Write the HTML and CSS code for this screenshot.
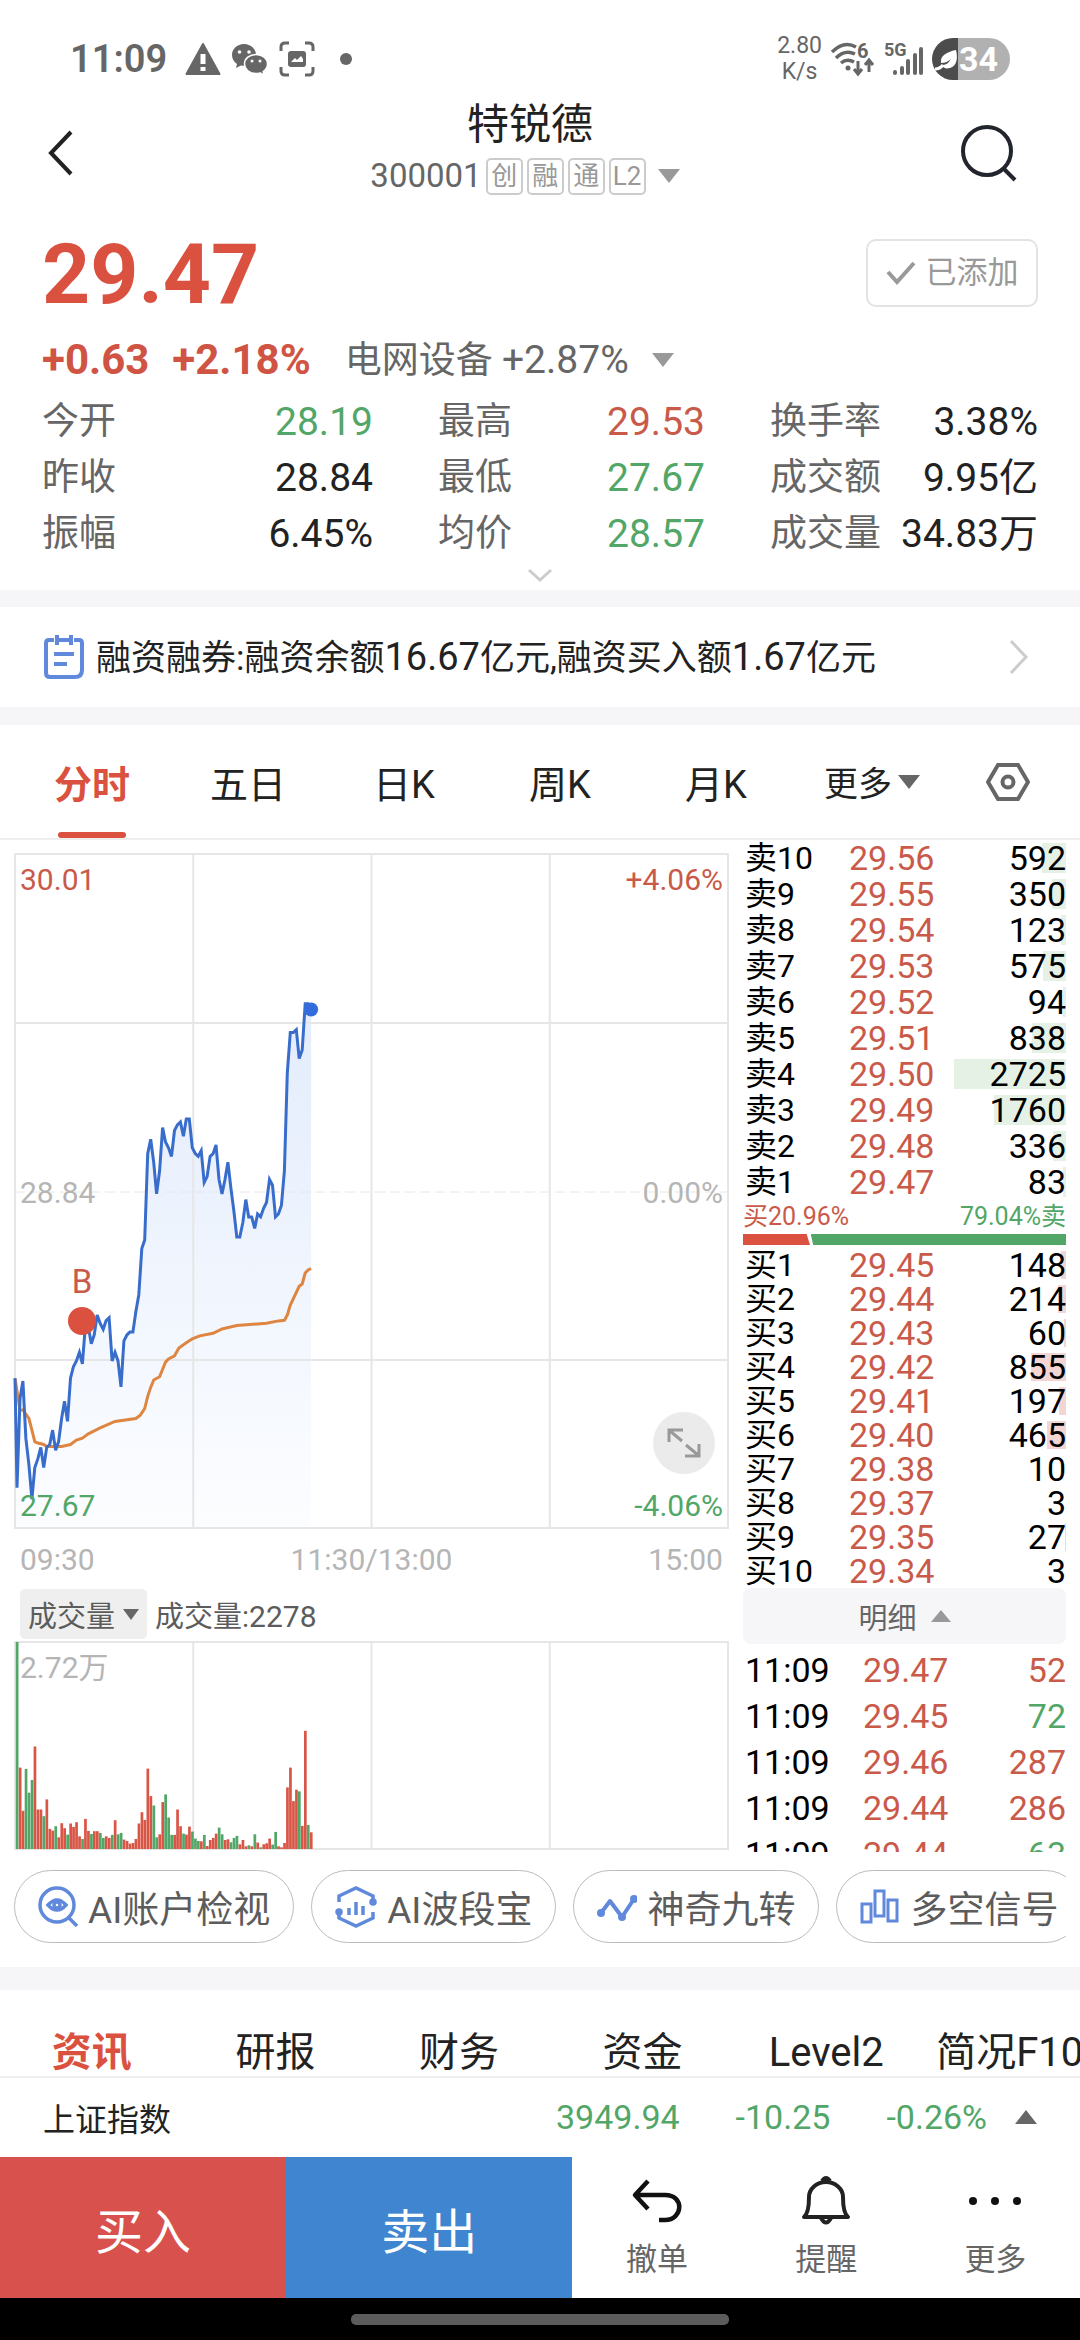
FILE: index.html
```html
<!DOCTYPE html>
<html lang="zh-CN">
<head>
  <meta charset="UTF-8" />
  <meta name="viewport" content="width=device-width, initial-scale=1.0"/>
  <title>特锐德 300001</title>
  <link rel="stylesheet" href="styles.css">
</head>
<body>

<!-- Status bar -->
<div class="status">
  <div class="status-side">
    <span class="clock">11:09</span>
    <svg width="36" height="36" viewBox="0 0 36 36"><path d="M18 3 L34.5 33 H1.5 Z" fill="#666" stroke="#666" stroke-width="2" stroke-linejoin="round"/><path d="M15.5 13h5v10h-5zM15.5 26h5v4h-5z" fill="#fff"/></svg>
    <svg width="38" height="36" viewBox="0 0 38 36"><path d="M13 3C6 3 1 8 1 14c0 4 2 7 5 9l-1 4 5-2.5c7 1.5 15-2.5 15-10.5C25 8 20 3 13 3z" fill="#666"/><path d="M25 13.5c-6.5 0-11.5 4-11.5 9.5s5 9.5 11.5 9.5c1.5 0 3-.2 4-.6l4 2.3-.8-3.7c2.5-1.8 4.3-4.3 4.3-7.5 0-5.5-5-9.5-11.5-9.5z" fill="#666" stroke="#fff" stroke-width="1.5"/><g fill="#fff"><circle cx="8.5" cy="11" r="1.8"/><circle cx="18" cy="11" r="1.8"/><circle cx="21" cy="20" r="1.5"/><circle cx="29" cy="20" r="1.5"/></g></svg>
    <svg width="36" height="36" viewBox="0 0 36 36"><path d="M2 10V6q0-4 4-4h4M26 2h4q4 0 4 4v4M34 26v4q0 4-4 4h-4M10 34H6q-4 0-4-4v-4" fill="none" stroke="#666" stroke-width="3"/><rect x="9" y="10" width="18" height="16" rx="3" fill="#666"/><path d="M12 21l4-4 2 2 4-4 2 3v3z" fill="#fff"/></svg>
    <span class="dot"></span>
  </div>
  <div class="status-side status-right">
    <span class="speed">2.80<br>K/s</span>
    <svg width="46" height="36" viewBox="0 0 46 36"><g fill="none" stroke="#666" stroke-width="3.5"><path d="M2 11Q14-1 26 6"/><path d="M6 17Q15 8 25 13"/><path d="M11 22Q17 17 24 21"/><path d="M28 20v12M24 28l4 5 4-5M39 31V20M35 24l4-5 4 5" stroke-width="3"/></g><circle cx="18" cy="27" r="2.5" fill="#666"/><text x="27" y="17" class="st-text st-six">6</text></svg>
    <svg width="40" height="36" viewBox="0 0 40 36"><text x="0" y="15" class="st-text">5G</text><path d="M11 32v-1M18 32V27M24 32V20M31 32V14M37 32V8" stroke="#666" stroke-width="4" stroke-linecap="round"/></svg>
    <span class="battery">
      <svg width="24" height="28" viewBox="0 0 24 28"><path d="M21 5c2 8 1 16-6 18-4 1-7 0-8-3 5 0 7-3 9-6-4 3-6 4-10 4-1-7 5-11 15-13z" fill="#fff"/><path d="M0 24q5 0 8-4" stroke="#fff" stroke-width="3" fill="none"/></svg>34
    </span>
  </div>
</div>

<!-- Title bar -->
<header class="topbar">
  <button class="icon-btn" aria-label="返回"><svg width="40" height="52" viewBox="0 0 40 52"><path d="M31 5L11 26l20 21" fill="none" stroke="#222" stroke-width="4"/></svg></button>
  <div class="stock">
    <h1>特锐德</h1>
    <div class="code">
      <span>300001</span>
      <i class="badge">创</i><i class="badge">融</i><i class="badge">通</i><i class="badge">L2</i>
      <i class="down"></i>
    </div>
  </div>
  <button class="icon-btn" aria-label="搜索"><svg width="58" height="58" viewBox="0 0 58 58"><circle cx="27" cy="27" r="24" fill="none" stroke="#22252d" stroke-width="4"/><path d="M43 44l12 12" stroke="#22252d" stroke-width="4"/></svg></button>
</header>

<!-- Quote -->
<section class="quote">
  <div class="price-row">
    <strong class="price">29.47</strong>
    <button class="added"><svg width="30" height="26" viewBox="0 0 30 26"><path d="M2 12l9 10L28 3" fill="none" stroke="#999" stroke-width="4"/></svg>已添加</button>
  </div>
  <div class="change-row">
    <b>+0.63</b><b>+2.18%</b>
    <span class="sector">电网设备 <em>+2.87%</em></span>
    <i class="down"></i>
  </div>
  <dl class="stats">
    <div><dt>今开</dt><dd class="green">28.19</dd></div>
    <div><dt>最高</dt><dd class="red">29.53</dd></div>
    <div><dt>换手率</dt><dd>3.38%</dd></div>
    <div><dt>昨收</dt><dd>28.84</dd></div>
    <div><dt>最低</dt><dd class="green">27.67</dd></div>
    <div><dt>成交额</dt><dd>9.95亿</dd></div>
    <div><dt>振幅</dt><dd>6.45%</dd></div>
    <div><dt>均价</dt><dd class="green">28.57</dd></div>
    <div><dt>成交量</dt><dd>34.83万</dd></div>
  </dl>
  <svg class="expand" width="28" height="20" viewBox="0 0 28 20"><path d="M3 4l11 10L25 4" fill="none" stroke="#ccc" stroke-width="3"/></svg>
</section>

<!-- Margin notice -->
<a class="notice" href="#">
  <svg width="42" height="46" viewBox="0 0 42 46" fill="none" stroke="#6089dc" stroke-width="4"><path d="M11 6H6Q3 6 3 9v30q0 4 4 4h25q7 0 7-7V9q0-3-3-3h-5M16 6h10M14 1v10M28 1v10M11 20h20M11 30h13"/></svg>
  <span>融资融券:融资余额<b>16.67</b>亿元,融资买入额<b>1.67</b>亿元</span>
  <svg width="20" height="36" viewBox="0 0 20 36"><path d="M2 2l15 16L2 34" fill="none" stroke="#ccc" stroke-width="3"/></svg>
</a>

<!-- Chart period tabs -->
<nav class="periods">
  <button class="active">分时</button>
  <button>五日</button>
  <button>日K</button>
  <button>周K</button>
  <button>月K</button>
  <button class="more">更多<i class="down dark"></i></button>
  <button class="setting" aria-label="设置"><svg width="44" height="40" viewBox="0 0 44 40" fill="none" stroke="#666" stroke-width="4"><path d="M12 3h20l10 17-10 17H12L2 20z"/><circle cx="22" cy="20" r="5.5"/></svg></button>
</nav>

<main class="board">
  <section class="charts">
    <div class="plot">
      <svg id="priceChart" viewBox="0 0 713 674" preserveAspectRatio="none"></svg>
      <span class="tl red">30.01</span><span class="tr red">+4.06%</span>
      <span class="ml">28.84</span><span class="mr">0.00%</span>
      <span class="bl green">27.67</span><span class="br green">-4.06%</span>
      <button class="full" aria-label="全屏"><svg width="36" height="36" viewBox="0 0 36 36" fill="none" stroke="#999" stroke-width="3"><path d="M3 17V5h14M4 6l12 10M20 20l12 10M19 31h14V19"/></svg></button>
    </div>
    <div class="times"><span>09:30</span><span>11:30/13:00</span><span>15:00</span></div>
    <div class="vol-head"><button>成交量<i class="down dark"></i></button><span>成交量:<b>2278</b></span></div>
    <div class="plot volume">
      <svg id="volumeChart" viewBox="0 0 713 207" preserveAspectRatio="none"></svg>
      <span class="tl">2.72万</span>
    </div>
  </section>

  <section class="book">
    <table class="asks">
      <tr><th>卖10</th><td>29.56</td><td class="qty" style="--w:24px">592</td></tr>
      <tr><th>卖9</th><td>29.55</td><td class="qty" style="--w:14px">350</td></tr>
      <tr><th>卖8</th><td>29.54</td><td class="qty" style="--w:5px">123</td></tr>
      <tr><th>卖7</th><td>29.53</td><td class="qty" style="--w:23px">575</td></tr>
      <tr><th>卖6</th><td>29.52</td><td class="qty" style="--w:3px">94</td></tr>
      <tr><th>卖5</th><td>29.51</td><td class="qty" style="--w:34px">838</td></tr>
      <tr><th>卖4</th><td>29.50</td><td class="qty" style="--w:112px">2725</td></tr>
      <tr><th>卖3</th><td>29.49</td><td class="qty" style="--w:72px">1760</td></tr>
      <tr><th>卖2</th><td>29.48</td><td class="qty" style="--w:13px">336</td></tr>
      <tr><th>卖1</th><td>29.47</td><td class="qty" style="--w:3px">83</td></tr>
    </table>
    <div class="ratio"><span class="red">买20.96%</span><span class="green">79.04%卖</span></div>
    <div class="ratio-bar"><i class="buy" style="width:20.96%"></i><i class="sell"></i></div>
    <table class="bids">
      <tr><th>买1</th><td>29.45</td><td class="qty" style="--w:5px">148</td></tr>
      <tr><th>买2</th><td>29.44</td><td class="qty" style="--w:8px">214</td></tr>
      <tr><th>买3</th><td>29.43</td><td class="qty" style="--w:2px">60</td></tr>
      <tr><th>买4</th><td>29.42</td><td class="qty" style="--w:35px">855</td></tr>
      <tr><th>买5</th><td>29.41</td><td class="qty" style="--w:7px">197</td></tr>
      <tr><th>买6</th><td>29.40</td><td class="qty" style="--w:19px">465</td></tr>
      <tr><th>买7</th><td>29.38</td><td class="qty">10</td></tr>
      <tr><th>买8</th><td>29.37</td><td class="qty">3</td></tr>
      <tr><th>买9</th><td>29.35</td><td class="qty" style="--w:1px">27</td></tr>
      <tr><th>买10</th><td>29.34</td><td class="qty">3</td></tr>
    </table>
    <button class="detail">明细<i class="up"></i></button>
    <div class="ticks">
      <table>
        <tr><th>11:09</th><td>29.47</td><td class="qty red">52</td></tr>
        <tr><th>11:09</th><td>29.45</td><td class="qty green">72</td></tr>
        <tr><th>11:09</th><td>29.46</td><td class="qty red">287</td></tr>
        <tr><th>11:09</th><td>29.44</td><td class="qty red">286</td></tr>
        <tr><th>11:09</th><td>29.44</td><td class="qty green">63</td></tr>
      </table>
    </div>
  </section>
</main>

<!-- Tool chips -->
<div class="chips">
  <button><svg width="40" height="42" viewBox="0 0 40 42" fill="none" stroke="#6089dc" stroke-width="3.5"><circle cx="19" cy="19" r="17"/><path d="M31 32l8 8"/><path d="M10 19q9-10 18 0q-9 10-18 0z"/><circle cx="19" cy="19" r="3"/></svg>AI账户检视</button>
  <button><svg width="42" height="42" viewBox="0 0 42 42" fill="none" stroke="#6089dc" stroke-width="3.5"><path d="M4 16V10L21 2l17 8v6M38 26v6l-17 8-17-8v-6M14 29v-7M21 29V16M28 29v-9"/><circle cx="38" cy="16" r="2"/><circle cx="4" cy="26" r="2"/></svg>AI波段宝</button>
  <button><svg width="40" height="42" viewBox="0 0 40 42" fill="none" stroke="#6089dc" stroke-width="4"><path d="M4 27l9-12 12 16L37 13" stroke-linejoin="round"/><circle cx="4" cy="27" r="2"/><circle cx="25" cy="31" r="2"/><circle cx="37" cy="13" r="2"/></svg>神奇九转</button>
  <button><svg width="40" height="42" viewBox="0 0 40 42" fill="none" stroke="#6089dc" stroke-width="3"><path d="M2 18h9v18H2zM15 5h9v25h-9zM28 14h9v21h-9z"/></svg>多空信号</button>
</div>

<!-- Info tabs -->
<nav class="info-tabs">
  <button class="active">资讯</button>
  <button>研报</button>
  <button>财务</button>
  <button>资金</button>
  <button>Level2</button>
  <button>简况F10</button>
</nav>

<div class="index-row">
  <span class="name">上证指数</span>
  <span>3949.94</span>
  <span>-10.25</span>
  <span>-0.26%</span>
  <i class="up dark"></i>
</div>

<!-- Trade bar -->
<footer class="trade">
  <button class="buy-btn">买入</button>
  <button class="sell-btn">卖出</button>
  <div class="actions">
    <button><svg width="52" height="52" viewBox="0 0 52 52" fill="none" stroke="#111" stroke-width="4.5"><path d="M17 6L4 20l13 14M5 20h29c20 0 18 25 0 25h-6" stroke-linejoin="round"/></svg>撤单</button>
    <button><svg width="52" height="52" viewBox="0 0 52 52" fill="none" stroke="#222" stroke-width="4"><path d="M4 42q5-4 5-20a17 15 0 0 1 34 0q0 16 5 20z" stroke-linejoin="round"/><path d="M22 6q4-6 8 0M21 43q5 9 10 0"/></svg>提醒</button>
    <button><svg width="52" height="52" viewBox="0 0 52 52" fill="#111"><circle cx="4" cy="26" r="4"/><circle cx="26" cy="26" r="4"/><circle cx="48" cy="26" r="4"/></svg>更多</button>
  </div>
</footer>
<div class="home"><i></i></div>

<script src="script.js"></script>
</body>
</html>
```

FILE: styles.css
```css
:root {
  --red: #db5140;
  --red-text: #c95a49;
  --green: #52a667;
  --gray: #666;
  --line: #eee;
  --band: #f6f6f9;
}

* {
  margin: 0;
  padding: 0;
  box-sizing: border-box;
}

body {
  font-family: Roboto, "Noto Sans CJK SC", sans-serif;
  background: #fff;
  color: #222;
  min-height: 100vh;
  display: flex;
  flex-direction: column;
  overflow-x: hidden;
}

button {
  font: inherit;
  color: inherit;
  background: none;
  border: none;
  cursor: pointer;
}

svg {
  display: block;
  flex-shrink: 0;
}

.red { color: var(--red-text); }
.green { color: var(--green); }

/* Triangles */
.down, .up {
  display: inline-block;
  border: 11px solid transparent;
  border-top: 14px solid #999;
  border-bottom: 0;
}

.up {
  border-top: 0;
  border-bottom: 14px solid #999;
}

.down.dark { border-top-color: #666; }
.up.dark { border-bottom-color: #666; }

/* Status bar */
.status {
  height: 96px;
  padding: 22px 70px 0;
  display: flex;
  justify-content: space-between;
  align-items: center;
  color: var(--gray);
}

.status-side {
  display: flex;
  align-items: center;
  gap: 10px;
}

.status-right { gap: 8px; }

.clock {
  font-size: 38px;
  line-height: 40px;
  font-weight: 600;
  margin-right: 8px;
}

.dot {
  width: 12px;
  height: 12px;
  margin-left: 15px;
  border-radius: 50%;
  background: #666;
}

.speed {
  font-size: 23px;
  line-height: 26px;
  text-align: center;
}

.st-text {
  font-size: 18px;
  font-weight: 700;
  fill: #666;
}

.st-six { font-size: 20px; }

.battery {
  height: 42px;
  width: 78px;
  padding-left: 3px;
  border-radius: 21px;
  background: linear-gradient(90deg, #4c4c4c 26px, #b1b1b1 26px);
  color: #fff;
  font-size: 34px;
  line-height: 42px;
  font-weight: 700;
  display: flex;
  align-items: center;
}

/* Title bar */
.topbar {
  height: 114px;
  padding: 0 62px 0 40px;
  display: flex;
  align-items: center;
}

.icon-btn { height: 60px; }

.stock {
  flex: 1;
  display: flex;
  flex-direction: column;
  align-items: center;
  gap: 8px;
  padding: 0 0 10px 10px;
}

.stock h1 {
  padding-left: 10px;
  font-size: 42px;
  line-height: 48px;
  font-weight: 400;
}

.code {
  display: flex;
  align-items: center;
  gap: 4px;
  font-size: 33px;
  line-height: 38px;
  color: var(--gray);
}

.badge {
  width: 37px;
  height: 37px;
  border: 2px solid #ccc;
  border-radius: 5px;
  font-size: 26px;
  line-height: 33px;
  font-style: normal;
  text-align: center;
  color: #999;
}

.code .down { margin-left: 8px; }

/* Quote */
.quote {
  padding: 20px 42px 0;
  height: 380px;
}

.price-row {
  display: flex;
  justify-content: space-between;
  align-items: center;
  height: 86px;
}

.price {
  font-size: 84px;
  line-height: 84px;
  padding-top: 4px;
  color: var(--red);
}

.added {
  width: 172px;
  height: 68px;
  border: 2px solid #e3e3e3;
  border-radius: 10px;
  display: flex;
  align-items: center;
  justify-content: center;
  gap: 10px;
  font-size: 31px;
  line-height: 44px;
  color: #999;
}

.change-row {
  display: flex;
  align-items: center;
  height: 52px;
  margin-top: 18px;
  gap: 23px;
  line-height: 52px;
  color: var(--gray);
}

.change-row b {
  font-size: 42px;
  color: #cf5443;
}

.sector {
  margin-left: 11px;
  font-size: 37px;
}

.sector em {
  font-size: 39px;
  font-style: normal;
}

.stats {
  display: grid;
  grid-template-columns: 331px 267px 1fr;
  column-gap: 65px;
  line-height: 56px;
  margin-top: 8px;
}

.stats div {
  display: flex;
  justify-content: space-between;
}

.stats dt {
  font-size: 37px;
  color: var(--gray);
}

.stats dd { font-size: 39px; }

.expand { margin: 4px auto 0; }

/* Margin notice */
.notice {
  display: flex;
  align-items: center;
  height: 135px;
  padding: 0 51px 0 43px;
  border: solid var(--band);
  border-width: 17px 0 18px;
  color: #222;
  text-decoration: none;
}

.notice span {
  flex: 1;
  margin-left: 11px;
  padding-top: 2px;
  font-size: 35px;
  line-height: 50px;
}

.notice b {
  font-size: 38px;
  font-weight: 400;
}

/* Period tabs */
.periods {
  display: flex;
  height: 115px;
  padding: 0 14px;
  border-bottom: 2px solid var(--line);
}

.periods button {
  flex: 156;
  display: flex;
  align-items: center;
  justify-content: center;
  gap: 6px;
  font-size: 38px;
  position: relative;
}

.periods .more { font-size: 34px; }

.periods .setting { flex: 116; }

.active {
  font-weight: 700;
  color: var(--red);
}

.periods .active::after {
  content: '';
  position: absolute;
  bottom: 0;
  width: 68px;
  height: 6px;
  border-radius: 3px;
  background: var(--red);
}

/* Charts */
.board {
  display: flex;
  padding: 0 14px 0 15px;
  gap: 15px;
  height: 1012px;
}

.charts {
  flex: 1;
  padding-top: 14px;
}

.plot {
  position: relative;
  height: 674px;
  font-size: 30px;
  line-height: 36px;
  color: #b5b5b5;
}

.plot > svg {
  width: 100%;
  height: 100%;
  overflow: visible;
}

.plot > span { position: absolute; }

.tl, .ml, .bl { left: 5px; }
.tr, .mr, .br { right: 5px; }
.tl, .tr { top: 8px; }
.ml, .mr { top: 321px; }
.bl, .br { bottom: 4px; }

.full {
  position: absolute;
  right: 13px;
  bottom: 54px;
  width: 62px;
  height: 62px;
  border-radius: 50%;
  background: #ebebeb;
  display: flex;
  align-items: center;
  justify-content: center;
}

.times {
  display: flex;
  justify-content: space-between;
  padding: 0 5px;
  height: 61px;
  font-size: 30px;
  line-height: 63px;
  color: #b5b5b5;
}

.vol-head {
  display: flex;
  align-items: center;
  gap: 8px;
  padding: 0 5px;
  font-size: 29px;
  color: #5c5c5c;
}

.vol-head b {
  font-size: 30px;
  font-weight: 400;
}

.vol-head button {
  height: 50px;
  padding: 0 8px;
  border-radius: 5px;
  background: #efefef;
  display: flex;
  align-items: center;
  gap: 8px;
}

.vol-head .down {
  border-width: 8px;
  border-top-width: 11px;
  border-bottom-width: 0;
}

.plot.volume {
  height: 207px;
  margin-top: 3px;
}

/* Order book */
.book {
  width: 323px;
  color: #000;
}

table {
  width: 100%;
  table-layout: fixed;
  border-collapse: collapse;
  font-size: 34px;
}

tr { height: 36px; }

th {
  width: 106px;
  padding-left: 2px;
  font-size: 32px;
  font-weight: 400;
  text-align: left;
  line-height: 34px;
}

td {
  width: 88px;
  color: var(--red-text);
  line-height: 34px;
}

.asks .qty, .bids .qty {
  width: auto;
  color: #000;
  text-align: right;
  background: linear-gradient(#e6f1e6, #e6f1e6) no-repeat right center;
  background-size: var(--w, 0) 30px;
}

.bids tr { height: 34px; }

.bids .qty {
  background-image: linear-gradient(#f3d5d4, #f3d5d4);
  background-size: var(--w, 0) 28px;
}

.ratio {
  display: flex;
  justify-content: space-between;
  font-size: 25px;
  line-height: 34px;
}

.ratio-bar {
  display: flex;
  height: 11px;
  margin-bottom: 3px;
}

.buy {
  background: var(--red);
  clip-path: polygon(0 0, 94% 0, 99% 100%, 0 100%);
}

.sell {
  flex: 1;
  background: var(--green);
  clip-path: polygon(0 0, 100% 0, 100% 100%, 1% 100%);
}

.detail {
  width: 100%;
  height: 56px;
  border-radius: 8px;
  background: var(--band);
  color: var(--gray);
  font-size: 29px;
  display: flex;
  align-items: center;
  justify-content: center;
  gap: 14px;
}

.detail .up { border-width: 0 10px 12px; }

.ticks {
  height: 208px;
  padding-top: 3px;
  overflow: hidden;
}

.ticks tr { height: 46px; }

.ticks th {
  width: 120px;
  font-size: 34px;
}

.ticks .qty {
  width: auto;
  text-align: right;
}

.ticks .green { color: var(--green); }

/* Tool chips */
.chips {
  display: flex;
  gap: 17px;
  margin: 0 14px;
  padding: 18px 0 24px;
  overflow: hidden;
}

.chips button {
  flex-shrink: 0;
  height: 73px;
  padding: 0 23px;
  border: 1px solid #bbb;
  border-radius: 37px;
  display: flex;
  align-items: center;
  gap: 10px;
  font-size: 37px;
  color: #5c5c5c;
}

/* Info tabs */
.info-tabs {
  display: flex;
  height: 111px;
  border-top: 23px solid var(--band);
  border-bottom: 2px solid var(--line);
  overflow: hidden;
}

.info-tabs button {
  flex: 0 0 17%;
  padding-top: 38px;
  font-size: 40px;
  line-height: 50px;
  white-space: nowrap;
}

/* Index */
.index-row {
  flex: 1;
  display: flex;
  align-items: center;
  gap: 56px;
  padding: 0 43px 2px;
  font-size: 34px;
  color: var(--green);
}

.index-row .name {
  flex: 1;
  font-size: 32px;
  color: #222;
}

.index-row .up { margin-left: -28px; }

/* Trade bar */
.trade {
  display: flex;
  height: 141px;
}

.buy-btn, .sell-btn {
  width: 26.5%;
  font-size: 48px;
  color: #fff;
}

.buy-btn { background: #d9514c; }
.sell-btn { background: #4085d0; }

.actions {
  flex: 1;
  display: flex;
}

.actions button {
  flex: 1;
  display: flex;
  flex-direction: column;
  align-items: center;
  gap: 10px;
  padding-top: 18px;
  font-size: 31px;
  line-height: 46px;
  color: var(--gray);
}

.home {
  height: 42px;
  background: #000;
  display: flex;
  align-items: center;
  justify-content: center;
}

.home i {
  width: 35%;
  height: 11px;
  border-radius: 5px;
  background: #5c5c5c;
}
```

FILE: script.js
```js
const HIGH = 30.01;
const LOW = 27.67;
const WIDTH = 713;
const HEIGHT = 674;
const STEP = WIDTH / 240;

// one price per minute from 09:30
const prices = [
  27.81, 28.12, 28.18, 27.98, 27.89, 27.77, 27.88, 27.91, 27.95, 27.88,
  27.95, 27.96, 28.01, 27.94, 27.97, 28.05, 28.11, 28.04, 28.19, 28.23,
  28.25, 28.28, 28.24, 28.37, 28.37, 28.31, 28.34, 28.41, 28.38, 28.36,
  28.39, 28.40, 28.25, 28.28, 28.25, 28.16, 28.32, 28.34, 28.35, 28.35,
  28.42, 28.48, 28.64, 28.67, 28.97, 29.02, 28.94, 28.83, 28.91, 29.06,
  29.01, 28.99, 28.96, 29.05, 29.07, 29.08, 29.03, 29.09, 29.09, 28.99,
  28.97, 28.96, 28.98, 28.87, 28.89, 28.96, 28.97, 29.00, 28.88, 28.83,
  28.88, 28.94, 28.85, 28.77, 28.68, 28.68, 28.73, 28.81, 28.75, 28.75,
  28.71, 28.76, 28.75, 28.78, 28.80, 28.88, 28.86, 28.75, 28.76, 28.79,
  28.91, 29.25, 29.39, 29.39, 29.40, 29.30, 29.33, 29.49, 29.49, 29.47
];

// [minute, average price]
const averages = [
  [1, 28.08], [2, 28.08], [4, 28.05], [5, 28.01], [6, 27.97], [7, 27.965], [9, 27.96],
  [10, 27.953], [15, 27.953], [18, 27.96], [20, 27.975], [22, 27.982], [24, 27.997],
  [28, 28.018], [33, 28.04], [40, 28.05], [41.5, 28.062], [43, 28.085], [44, 28.127],
  [45, 28.158], [46, 28.184], [48, 28.195], [50, 28.246], [51, 28.257], [53, 28.268],
  [54.5, 28.295], [57, 28.313], [59, 28.327], [61.5, 28.337], [66, 28.346],
  [69, 28.361], [74, 28.373], [84, 28.381], [88, 28.389], [90, 28.391], [91, 28.409],
  [92, 28.444], [95, 28.509], [96, 28.517], [97, 28.555], [98, 28.566], [99, 28.571]
];

// volume per minute, 618 is full height, negative means a falling minute
const volumes = [
  -618, 243, 114, -239, -168, -206, 306, 118, 118, -98, 148, 60, 55, -68, 35, 77, 62, -43, 76, 66,
  80, 38, -30, 90, 54, -45, 53, 53, -48, -33, 38, 33, -42, 86, -44, -48, 28, 24, 16, 18,
  30, 76, 110, 87, 240, 158, -130, -35, 44, 140, -163, -94, -42, 42, 118, 68, -46, 43, 67, -52,
  -31, -24, 23, -42, 9, 27, 33, 46, -64, -44, 27, 29, -20, -33, -39, 14, 27, 8, -11, 8,
  -44, 19, -5, 14, 17, 31, -13, -51, 8, 5, 18, 184, 243, 143, 177, -172, 69, 353, -72, 50
];

const px = minute => (2 + minute * STEP).toFixed(1);
const py = price => ((HIGH - price) / (HIGH - LOW) * HEIGHT).toFixed(1);

function grid(height) {
  let out = `<rect x="0" y="0" width="${WIDTH}" height="${height}" fill="none" stroke="#e6e6e6" stroke-width="2"/>`;
  [0.25, 0.5, 0.75].forEach(k => {
    const x = WIDTH * k;
    out += `<path d="M${x} 0V${height}" stroke="#e6e6e6" stroke-width="2"/>`;
  });
  return out;
}

function drawPrice() {
  const line = `0,${py(28.19)} ` + prices.map((p, i) => `${px(i)},${py(p)}`).join(" ");
  const avg = `0,${py(28.19)} ` + averages.map(([m, p]) => `${px(m)},${py(p)}`).join(" ");
  const endX = px(99);
  document.getElementById("priceChart").innerHTML = `
    <defs><linearGradient id="fade" x1="0" y1="0" x2="0" y2="1">
      <stop offset="0" stop-color="#e3ecfc"/><stop offset="1" stop-color="#fcfdff"/>
    </linearGradient></defs>
    <polygon points="${line} ${endX},${HEIGHT} 0,${HEIGHT}" fill="url(#fade)"/>
    ${grid(HEIGHT)}
    <path d="M0 169H713M0 506H713" stroke="#e6e6e6" stroke-width="2"/>
    <path d="M0 338H713" stroke="#e6e6e6" stroke-width="1" stroke-dasharray="10 5"/>
    <polyline points="${avg}" fill="none" stroke="#de8641" stroke-width="3"/>
    <polyline points="${line}" fill="none" stroke="#386dcc" stroke-width="3"/>
    <circle cx="${endX}" cy="${py(29.47)}" r="7" fill="#336ddb"/>
    <circle cx="67" cy="467" r="14" fill="#db5140"/>
    <text x="67" y="439" text-anchor="middle" font-size="33" fill="#c95a49">B</text>`;
}

function drawVolume() {
  const bars = volumes.map((v, i) => {
    const h = Math.abs(v) / 618 * 207;
    const color = v < 0 ? "#52a667" : "#d95545";
    return `<rect x="${(i * STEP + 0.8).toFixed(1)}" y="${(207 - h).toFixed(1)}" width="2.7" height="${h.toFixed(1)}" fill="${color}"/>`;
  });
  document.getElementById("volumeChart").innerHTML = grid(207) + bars.join("");
}

drawPrice();
drawVolume();
```
